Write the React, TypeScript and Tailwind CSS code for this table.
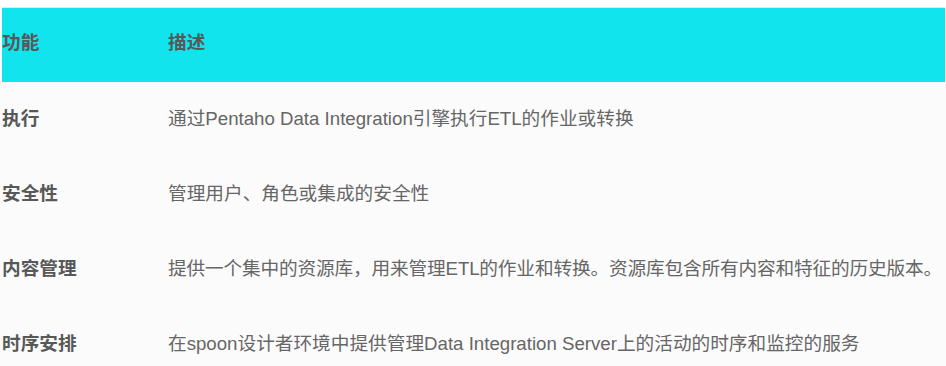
const rows = [
  { name: "执行", desc: "通过Pentaho Data Integration引擎执行ETL的作业或转换", tight: false },
  { name: "安全性", desc: "管理用户、角色或集成的安全性", tight: false },
  {
    name: "内容管理",
    desc: "提供一个集中的资源库，用来管理ETL的作业和转换。资源库包含所有内容和特征的历史版本。",
    tight: true,
  },
  {
    name: "时序安排",
    desc: "在spoon设计者环境中提供管理Data Integration Server上的活动的时序和监控的服务",
    tight: false,
  },
];

export default function App() {
  return (
    <div
      className="w-[946px] h-[366px] overflow-hidden bg-[#fbfbfb] text-[14pt] leading-none text-[#666666]"
      style={{ fontFamily: '"Liberation Sans", "Noto Sans CJK SC", sans-serif' }}
    >
      <div className="h-[7px] bg-white" />
      <div className="ml-[2px] w-[943px]">
        {/* Header */}
        <div className="grid grid-cols-[166px_1fr] h-[75px] items-center bg-[#12e4ee] font-bold text-[#585858] border-t border-[#cfeff2]">
          <span className="-mt-[3px]">功能</span>
          <span className="-mt-[3px]">描述</span>
        </div>

        {/* Body rows */}
        {rows.map((row) => (
          <div key={row.name} className="grid grid-cols-[166px_1fr] h-[75px] items-center">
            <span className="font-bold text-[#585858]">{row.name}</span>
            <span className={`whitespace-nowrap ${row.tight ? "tracking-[-0.15px]" : ""}`}>
              {row.desc}
            </span>
          </div>
        ))}
      </div>
    </div>
  );
}
